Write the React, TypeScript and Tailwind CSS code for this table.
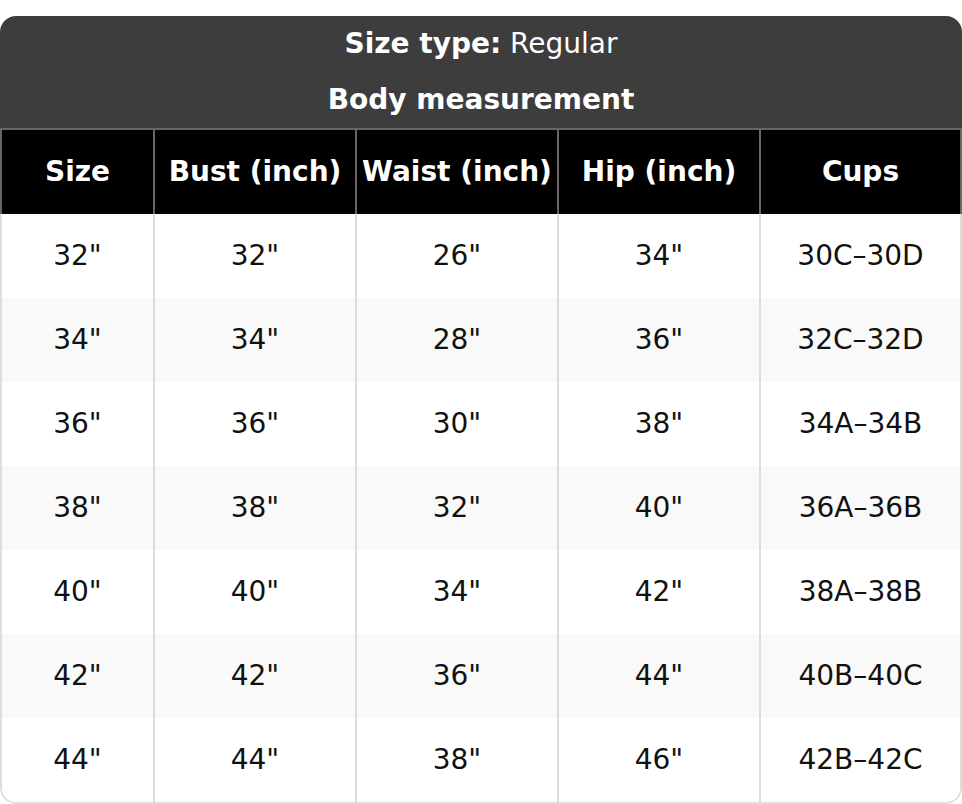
const headers = ["Size", "Bust (inch)", "Waist (inch)", "Hip (inch)", "Cups"];

const rows = [
  ['32"', '32"', '26"', '34"', "30C–30D"],
  ['34"', '34"', '28"', '36"', "32C–32D"],
  ['36"', '36"', '30"', '38"', "34A–34B"],
  ['38"', '38"', '32"', '40"', "36A–36B"],
  ['40"', '40"', '34"', '42"', "38A–38B"],
  ['42"', '42"', '36"', '44"', "40B–40C"],
  ['44"', '44"', '38"', '46"', "42B–42C"],
];

export default function App() {
  return (
    <div className="bg-white pt-4 w-[962px] font-['DejaVu_Sans',sans-serif] text-[28px]">
      <div className="rounded-2xl overflow-hidden">
        {/* title block */}
        <div className="bg-[#3d3d3d] text-white">
          <div className="h-[56px] flex items-center justify-center">
            <span className="font-bold">Size type:</span>
            <span>&nbsp;Regular</span>
          </div>
          <div className="h-[56px] flex items-center justify-center font-bold">Body measurement</div>
        </div>

        {/* column headers */}
        <div className="grid grid-cols-[153px_202px_202px_202px_203px] bg-black text-white font-bold border-t-2 border-[#666]">
          {headers.map((h, i) => (
            <div
              key={h}
              className={
                "h-[84px] flex items-center justify-center border-l-2 border-[#666]" +
                (i === headers.length - 1 ? " border-r-2" : "")
              }
            >
              {h}
            </div>
          ))}
        </div>

        {/* body */}
        <div className="rounded-b-2xl border-x-2 border-b-2 border-[#ddd] overflow-hidden text-[#111]">
          {rows.map((r, ri) => (
            <div
              key={ri}
              className={
                "grid grid-cols-[151px_202px_202px_202px_201px] " + (ri % 2 === 1 ? "bg-[#f9f9f9]" : "bg-white")
              }
            >
              {r.map((c, ci) => (
                <div
                  key={ci}
                  className={"h-[84px] flex items-center justify-center" + (ci > 0 ? " border-l-2 border-[#ddd]" : "")}
                >
                  {c}
                </div>
              ))}
            </div>
          ))}
        </div>
      </div>
    </div>
  );
}
